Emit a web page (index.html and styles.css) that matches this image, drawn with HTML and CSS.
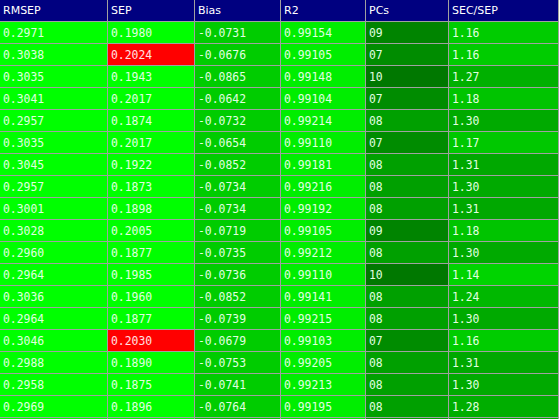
FILE: index.html
```html
<!DOCTYPE html>
<html>
<head>
<meta charset="utf-8">
<link rel="stylesheet" href="styles.css">
</head>
<body>
<div class="grid">
  <div class="h">RMSEP</div><div class="h">SEP</div><div class="h">Bias</div><div class="h">R2</div><div class="h">PCs</div><div class="h">SEC/SEP</div>

  <div class="c rm">0.2971</div><div class="c se">0.1980</div><div class="c bi">-0.0731</div><div class="c r2">0.99154</div><div class="c pc9">09</div><div class="c q16">1.16</div>
  <div class="c rm">0.3038</div><div class="c bad">0.2024</div><div class="c bi">-0.0676</div><div class="c r2">0.99105</div><div class="c pc7">07</div><div class="c q16">1.16</div>
  <div class="c rm">0.3035</div><div class="c se">0.1943</div><div class="c bi">-0.0865</div><div class="c r2">0.99148</div><div class="c pc10">10</div><div class="c q27">1.27</div>
  <div class="c rm">0.3041</div><div class="c se">0.2017</div><div class="c bi">-0.0642</div><div class="c r2">0.99104</div><div class="c pc7">07</div><div class="c q18">1.18</div>
  <div class="c rm">0.2957</div><div class="c se">0.1874</div><div class="c bi">-0.0732</div><div class="c r2">0.99214</div><div class="c pc8">08</div><div class="c q30">1.30</div>
  <div class="c rm">0.3035</div><div class="c se">0.2017</div><div class="c bi">-0.0654</div><div class="c r2">0.99110</div><div class="c pc7">07</div><div class="c q17">1.17</div>
  <div class="c rm">0.3045</div><div class="c se">0.1922</div><div class="c bi">-0.0852</div><div class="c r2">0.99181</div><div class="c pc8">08</div><div class="c q31">1.31</div>
  <div class="c rm">0.2957</div><div class="c se">0.1873</div><div class="c bi">-0.0734</div><div class="c r2">0.99216</div><div class="c pc8">08</div><div class="c q30">1.30</div>
  <div class="c rm">0.3001</div><div class="c se">0.1898</div><div class="c bi">-0.0734</div><div class="c r2">0.99192</div><div class="c pc8">08</div><div class="c q31">1.31</div>
  <div class="c rm">0.3028</div><div class="c se">0.2005</div><div class="c bi">-0.0719</div><div class="c r2">0.99105</div><div class="c pc9">09</div><div class="c q18">1.18</div>
  <div class="c rm">0.2960</div><div class="c se">0.1877</div><div class="c bi">-0.0735</div><div class="c r2">0.99212</div><div class="c pc8">08</div><div class="c q30">1.30</div>
  <div class="c rm">0.2964</div><div class="c se">0.1985</div><div class="c bi">-0.0736</div><div class="c r2">0.99110</div><div class="c pc10">10</div><div class="c q14">1.14</div>
  <div class="c rm">0.3036</div><div class="c se">0.1960</div><div class="c bi">-0.0852</div><div class="c r2">0.99141</div><div class="c pc8">08</div><div class="c q24">1.24</div>
  <div class="c rm">0.2964</div><div class="c se">0.1877</div><div class="c bi">-0.0739</div><div class="c r2">0.99215</div><div class="c pc8">08</div><div class="c q30">1.30</div>
  <div class="c rm">0.3046</div><div class="c bad">0.2030</div><div class="c bi">-0.0679</div><div class="c r2">0.99103</div><div class="c pc7">07</div><div class="c q16">1.16</div>
  <div class="c rm">0.2988</div><div class="c se">0.1890</div><div class="c bi">-0.0753</div><div class="c r2">0.99205</div><div class="c pc8">08</div><div class="c q31">1.31</div>
  <div class="c rm">0.2958</div><div class="c se">0.1875</div><div class="c bi">-0.0741</div><div class="c r2">0.99213</div><div class="c pc8">08</div><div class="c q30">1.30</div>
  <div class="c rm">0.2969</div><div class="c se">0.1896</div><div class="c bi">-0.0764</div><div class="c r2">0.99195</div><div class="c pc8">08</div><div class="c q28">1.28</div>
  <div class="c rm"></div><div class="c se"></div><div class="c bi"></div><div class="c r2"></div><div class="c pc8"></div><div class="c q30"></div>
</div>
</body>
</html>
```
FILE: styles.css
```css
html, body {
  margin: 0;
  padding: 0;
  overflow: hidden;
  background: #ffffff;
}
.grid {
  display: grid;
  grid-template-columns: 107px 86px 85px 84px 82px 109px;
  grid-auto-rows: 21px;
  gap: 1px;
  padding-right: 1px;
  width: 558px;
  background: #a0a0a0;
}
.h, .c {
  display: flex;
  align-items: center;
  padding-left: 3px;
  white-space: nowrap;
  overflow: hidden;
}
.h {
  background: #000080;
  color: #ffffff;
  font-family: "DejaVu Sans", Verdana, sans-serif;
  font-size: 11px;
}
.c {
  color: #e0ffe0;
  font-family: "DejaVu Sans Mono", monospace;
  font-size: 11.4px;
}
.rm { background: #00ff00; }
.se { background: #00ff00; }
.bad { background: #ff0000; color: #ffe0e0; }
.bi { background: #00cc00; }
.r2 { background: #00ee00; }
.pc7 { background: #008c00; }
.pc8 { background: #00a000; }
.pc9 { background: #008400; }
.pc10 { background: #007800; }
.q14 { background: #00d400; }
.q16 { background: #00cc00; }
.q17 { background: #00c800; }
.q18 { background: #00c400; }
.q24 { background: #00b800; }
.q27 { background: #00b000; }
.q28 { background: #00ae00; }
.q30 { background: #00aa00; }
.q31 { background: #00a800; }
```
